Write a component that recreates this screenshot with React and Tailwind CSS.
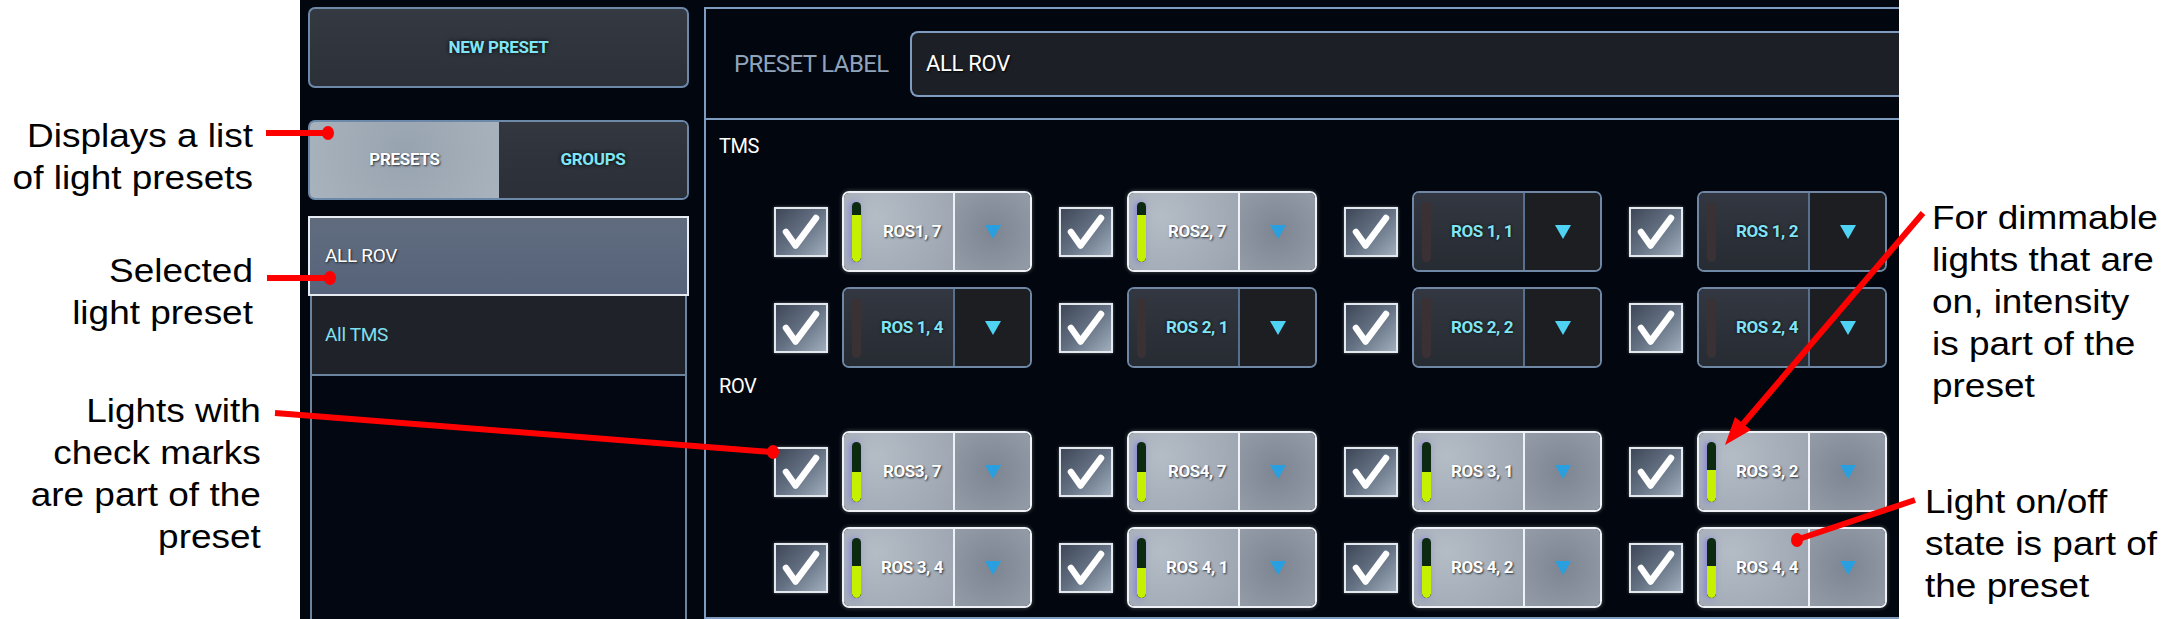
import React from "react";

// ─── DATA ───
const tmsLights = [
  { name: "ROS1, 7", on: true, level: 78 },
  { name: "ROS2, 7", on: true, level: 78 },
  { name: "ROS 1, 1", on: false },
  { name: "ROS 1, 2", on: false },
  { name: "ROS 1, 4", on: false },
  { name: "ROS 2, 1", on: false },
  { name: "ROS 2, 2", on: false },
  { name: "ROS 2, 4", on: false },
];

const rovLights = [
  { name: "ROS3, 7", on: true, level: 50 },
  { name: "ROS4, 7", on: true, level: 50 },
  { name: "ROS 3, 1", on: true, level: 50 },
  { name: "ROS 3, 2", on: true, level: 52 },
  { name: "ROS 3, 4", on: true, level: 53 },
  { name: "ROS 4, 1", on: true, level: 50 },
  { name: "ROS 4, 2", on: true, level: 52 },
  { name: "ROS 4, 4", on: true, level: 53 },
];

const Check = () => (
  <div className="flex h-[50px] w-[54px] shrink-0 items-center justify-center border-2 border-[#e3e9ef] bg-[linear-gradient(135deg,#3e4757_0%,#647183_50%,#a0adbb_100%)] shadow-[0_0_3px_rgba(255,255,255,0.35)]">
    <svg width="50" height="46" viewBox="0 0 50 46">
      <path d="M10 23 L19.5 36.5 L40 9" fill="none" stroke="#fff" strokeWidth="6.5" strokeLinecap="round" strokeLinejoin="round" />
    </svg>
  </div>
);

const Arrow = ({ color }) => (
  <svg width="16" height="14" viewBox="0 0 16 14">
    <polygon points="0,0 16,0 8,14" fill={color} />
  </svg>
);

const LightButton = ({ light }) => {
  if (light.on) {
    return (
      <div className="flex h-[81px] w-[190px] shrink-0 overflow-hidden rounded-[7px] border-2 border-[#eef2f6] shadow-[0_0_4px_rgba(255,255,255,0.3)]">
        <div className="flex w-[109px] items-center bg-[radial-gradient(circle_at_30%_30%,#b4bcc6,#9aa3ae)] pl-[8px]">
          <div className="flex h-[60px] w-[9px] flex-col overflow-hidden rounded-full bg-[#0b2a10] shadow-[-2px_0_6px_rgba(120,110,230,0.75)]">
            <div className="flex-1" />
            <div className="w-full rounded-b-full bg-[#c5f000]" style={{ height: `${light.level}%` }} />
          </div>
          <span className="ml-[10px] flex-1 text-center text-[17px] font-bold tracking-[-0.4px] text-white [text-shadow:1px_1px_2px_#2a3038]">
            {light.name}
          </span>
        </div>
        <div className="flex flex-1 items-center justify-center border-l-2 border-[#eef2f6] bg-[radial-gradient(circle_at_50%_50%,#7c8591,#939ca7)]">
          <Arrow color="#2a9fe0" />
        </div>
      </div>
    );
  }
  return (
    <div className="flex h-[81px] w-[190px] shrink-0 overflow-hidden rounded-[7px] border-2 border-[#6d87a5]">
      <div className="flex w-[109px] items-center bg-[linear-gradient(180deg,#323741,#272b32)] pl-[8px]">
        <div className="h-[60px] w-[9px] rounded-full bg-[#3a3135]" />
        <span className="ml-[10px] flex-1 text-center text-[17px] font-bold tracking-[-0.4px] text-[#80e4f4] [text-shadow:0_0_3px_#000]">
          {light.name}
        </span>
      </div>
      <div className="flex flex-1 items-center justify-center border-l-2 border-[#56708e] bg-[#1c1e22]">
        <Arrow color="#4fd3f4" />
      </div>
    </div>
  );
};

const LightGrid = ({ lights }) => (
  <div className="ml-[55px] mt-[33px] grid grid-cols-[repeat(4,258px)] gap-x-[27px] gap-y-[15px]">
    {lights.map((light) => (
      <div key={light.name} className="flex items-center gap-[14px]">
        <Check />
        <LightButton light={light} />
      </div>
    ))}
  </div>
);

// ─── CONSOLE SCREEN ───
const Console = () => (
  <div className="flex h-[619px] w-[1599px] shrink-0 gap-[15px] overflow-hidden bg-[#02060e] pl-[8px] pt-[7px] font-['Roboto','Liberation_Sans',sans-serif]">
    {/* Left column */}
    <div className="flex w-[381px] shrink-0 flex-col">
      <div className="flex h-[81px] items-center justify-center rounded-[7px] border-2 border-[#6d89aa] bg-[linear-gradient(180deg,#343942,#2c3038)] text-[17px] font-bold tracking-[-0.3px] text-[#7fe6f5] [text-shadow:0_0_4px_#000]">
        NEW PRESET
      </div>

      <div className="mt-[32px] flex h-[80px] overflow-hidden rounded-[7px] border-2 border-[#6d89aa]">
        <div className="-m-[2px] flex w-[193px] items-center justify-center rounded-l-[7px] border-2 border-[#eef2f6] bg-[radial-gradient(circle_at_50%_40%,#97a3af,#a9b3bd)] text-[17px] font-bold tracking-[-0.3px] text-white [text-shadow:1px_1px_2px_#2a3038]">
          PRESETS
        </div>
        <div className="flex flex-1 items-center justify-center bg-[linear-gradient(180deg,#323740,#2b2f37)] text-[17px] font-bold tracking-[-0.3px] text-[#7fe6f5] [text-shadow:0_0_4px_#000]">
          GROUPS
        </div>
      </div>

      <div className="mt-[16px] flex flex-1 flex-col">
        <div className="flex h-[80px] items-center border-2 border-[#e6ecf2] bg-[linear-gradient(180deg,#606c7e,#57637a)] pl-[15px] text-[19px] tracking-[-0.3px] text-white [text-shadow:1px_1px_2px_#1f242c]">
          ALL ROV
        </div>
        <div className="mx-[2px] flex h-[80px] items-center border-x-2 border-b-2 border-[#6a84a0] bg-[#1f2228] pl-[13px] text-[19px] tracking-[-0.3px] text-[#7fe0f2]">
          All TMS
        </div>
        <div className="mx-[2px] flex-1 border-x-2 border-[#6a84a0] bg-[#020711]" />
      </div>
    </div>

    {/* Right panel */}
    <div className="flex h-[612px] w-[1300px] shrink-0 flex-col border-2 border-[#7d9cc0]">
      <div className="flex h-[111px] items-center border-b-2 border-[#7d9cc0] pl-[28px]">
        <span className="w-[176px] text-[24px] tracking-[-0.6px] text-[#8fa4bb]">PRESET LABEL</span>
        <div className="flex h-[66px] flex-1 items-center rounded-l-[8px] border-2 border-r-0 border-[#7d9cc0] bg-[#1c1f25] pl-[14px] text-[22px] tracking-[-0.3px] text-white [text-shadow:1px_1px_2px_#000]">
          ALL ROV
        </div>
      </div>

      <div className="flex flex-col pl-[13px]">
        <div className="mt-[14px] h-[24px] text-[20px] leading-[24px] tracking-[-0.4px] text-white">TMS</div>
        <LightGrid lights={tmsLights} />
        <div className="mt-[6px] h-[24px] text-[20px] leading-[24px] tracking-[-0.4px] text-white">ROV</div>
        <LightGrid lights={rovLights} />
      </div>
    </div>
  </div>
);

// ─── CALLOUTS ───
const noteText = "origin-right scale-x-[1.12] text-right text-[33px] leading-[42px]";

const LeftNotes = () => (
  <div className="flex w-[300px] shrink-0 flex-col">
    <div className={`mt-[115px] pr-[42px] ${noteText}`}>
      Displays a list
      <br />
      of light presets
    </div>
    <div className={`mt-[51px] pr-[42px] ${noteText}`}>
      Selected
      <br />
      light preset
    </div>
    <div className={`mt-[56px] pr-[35px] ${noteText}`}>
      Lights with
      <br />
      check marks
      <br />
      are part of the
      <br />
      preset
    </div>
  </div>
);

const rightNote = "origin-left scale-x-[1.12] text-left text-[33px] leading-[42px]";

const RightNotes = () => (
  <div className="flex flex-1 flex-col">
    <div className={`ml-[33px] mt-[197px] ${rightNote}`}>
      For dimmable
      <br />
      lights that are
      <br />
      on, intensity
      <br />
      is part of the
      <br />
      preset
    </div>
    <div className={`ml-[26px] mt-[74px] ${rightNote}`}>
      Light on/off
      <br />
      state is part of
      <br />
      the preset
    </div>
  </div>
);

const Arrows = () => (
  <svg className="pointer-events-none absolute inset-0" width="2173" height="619" viewBox="0 0 2173 619">
    <g stroke="#ff0000" strokeWidth="6" fill="#ff0000">
      <line x1="266" y1="133" x2="326" y2="133" />
      <ellipse cx="328" cy="133" rx="6" ry="7" stroke="none" />
      <line x1="267" y1="278" x2="328" y2="278" />
      <ellipse cx="330" cy="278" rx="6" ry="7" stroke="none" />
      <line x1="275" y1="413" x2="771" y2="452" />
      <ellipse cx="773" cy="452" rx="6" ry="7" stroke="none" />
      <line x1="1923" y1="213" x2="1743" y2="424" />
      <polygon points="1725,445 1751,430 1735,417" stroke="none" />
      <line x1="1915" y1="500" x2="1799" y2="539" />
      <ellipse cx="1797" cy="540" rx="6" ry="7" stroke="none" />
    </g>
  </svg>
);

export default function App() {
  return (
    <div className="relative flex h-[619px] w-[2173px] overflow-hidden bg-white font-['Liberation_Sans',Arial,sans-serif] text-black">
      <LeftNotes />
      <Console />
      <RightNotes />
      <Arrows />
    </div>
  );
}
